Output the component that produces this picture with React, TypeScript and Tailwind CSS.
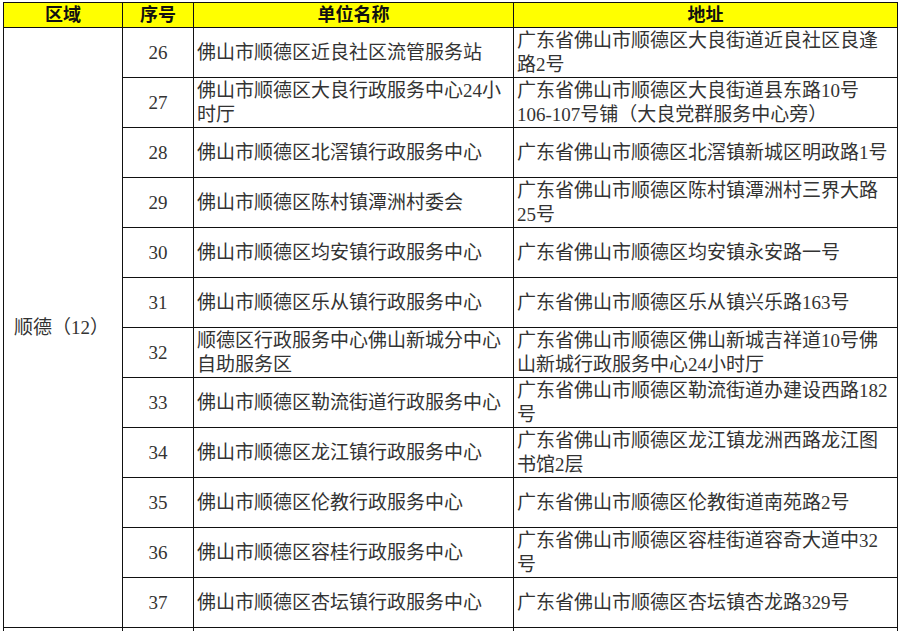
import React from 'react';

type Row = { no: number; name: string; addr: React.ReactNode };

const rows: Row[] = [
    { no: 26, name: '佛山市顺德区近良社区流管服务站', addr: '广东省佛山市顺德区大良街道近良社区良逢路2号' },
    {
        no: 27,
        name: '佛山市顺德区大良行政服务中心24小时厅',
        addr: (
            <>
                广东省佛山市顺德区大良街道县东路10号
                <br />
                106-107号铺（大良党群服务中心旁）
            </>
        ),
    },
    { no: 28, name: '佛山市顺德区北滘镇行政服务中心', addr: '广东省佛山市顺德区北滘镇新城区明政路1号' },
    { no: 29, name: '佛山市顺德区陈村镇潭洲村委会', addr: '广东省佛山市顺德区陈村镇潭洲村三界大路25号' },
    { no: 30, name: '佛山市顺德区均安镇行政服务中心', addr: '广东省佛山市顺德区均安镇永安路一号' },
    { no: 31, name: '佛山市顺德区乐从镇行政服务中心', addr: '广东省佛山市顺德区乐从镇兴乐路163号' },
    { no: 32, name: '顺德区行政服务中心佛山新城分中心自助服务区', addr: '广东省佛山市顺德区佛山新城吉祥道10号佛山新城行政服务中心24小时厅' },
    { no: 33, name: '佛山市顺德区勒流街道行政服务中心', addr: '广东省佛山市顺德区勒流街道办建设西路182号' },
    { no: 34, name: '佛山市顺德区龙江镇行政服务中心', addr: '广东省佛山市顺德区龙江镇龙洲西路龙江图书馆2层' },
    { no: 35, name: '佛山市顺德区伦教行政服务中心', addr: '广东省佛山市顺德区伦教街道南苑路2号' },
    { no: 36, name: '佛山市顺德区容桂行政服务中心', addr: '广东省佛山市顺德区容桂街道容奇大道中32号' },
    { no: 37, name: '佛山市顺德区杏坛镇行政服务中心', addr: '广东省佛山市顺德区杏坛镇杏龙路329号' },
];

const font = { fontFamily: '"Liberation Serif", "Noto Sans CJK SC", serif' };

export default function App() {
    return (
        <div className="bg-white w-[901px] h-[631px] overflow-hidden pt-[2px] pl-[3px]" style={font}>
            <table className="table-fixed border-collapse w-[894px] text-[#333] text-[19px] leading-[24px]">
                <colgroup>
                    <col className="w-[119px]" />
                    <col className="w-[71px]" />
                    <col className="w-[320px]" />
                    <col className="w-[384px]" />
                </colgroup>
                <thead>
                    <tr className="bg-[#ffff00] h-[25px] text-[#111] font-bold text-[18px] leading-[22px]">
                        <th className="border border-[#111] text-center">区域</th>
                        <th className="border border-[#111] text-center">序号</th>
                        <th className="border border-[#111] text-center">单位名称</th>
                        <th className="border border-[#111] text-center">地址</th>
                    </tr>
                </thead>
                <tbody>
                    {rows.map((r, i) => (
                        <tr key={r.no} className="h-[50px]">
                            {i === 0 && (
                                <td rowSpan={12} className="border border-[#111] align-middle pl-[10px]">
                                    顺德（12）
                                </td>
                            )}
                            <td className="border border-[#111] text-center align-middle">{r.no}</td>
                            <td className="border border-[#111] align-middle px-[3px]">{r.name}</td>
                            <td className="border border-[#111] align-middle px-[3px]">{r.addr}</td>
                        </tr>
                    ))}
                    <tr className="h-[50px]">
                        <td className="border border-[#111]"></td>
                        <td className="border border-[#111]"></td>
                        <td className="border border-[#111]"></td>
                        <td className="border border-[#111]"></td>
                    </tr>
                </tbody>
            </table>
        </div>
    );
}
